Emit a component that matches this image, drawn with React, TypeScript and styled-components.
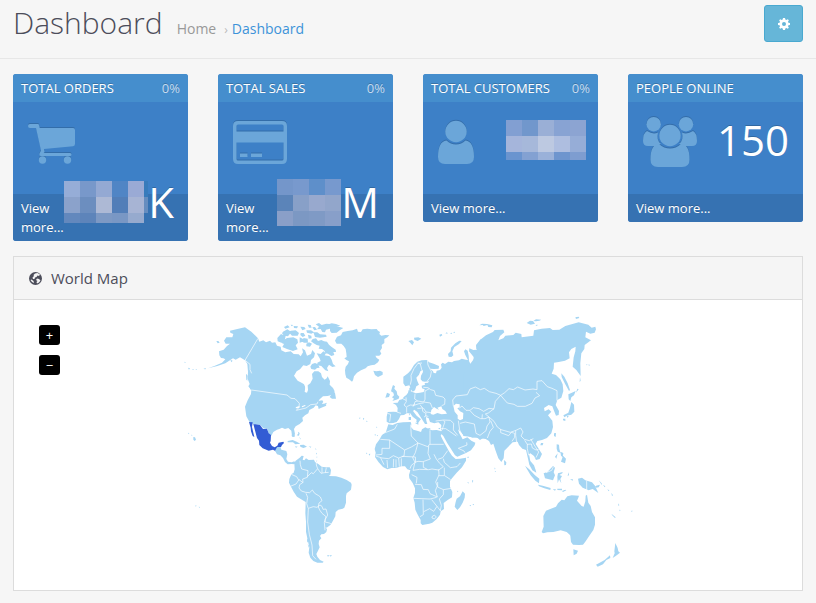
import React from 'react';
import styled, { createGlobalStyle } from 'styled-components';

const GlobalStyle = createGlobalStyle`
  * { box-sizing: border-box; }
  body {
    margin: 0;
    background: #f6f6f6;
    color: #4c4d5a;
    font: 13px/18px 'Open Sans', 'Noto Sans', sans-serif;
  }
`;

const PageHeader = styled.header`
  display: flex;
  justify-content: space-between;
  align-items: flex-start;
  padding: 5px 13px 16px;
  border-bottom: 1px solid #e7e7e7;
`;

const TitleGroup = styled.div`
  display: flex;
  align-items: baseline;
  gap: 14px;
`;

const Title = styled.h1`
  margin: 0;
  font-size: 30px;
  font-weight: 300;
  line-height: 36px;
`;

const Breadcrumb = styled.nav`
  display: flex;
  align-items: baseline;
  gap: 8px;
  font-size: 14px;
  color: #bbb;
`;

const Crumb = styled.a<{ $current?: boolean }>`
  color: ${(p) => (p.$current ? '#3d93d9' : '#999')};
  text-decoration: none;
`;

const Separator = styled.span`
  font-size: 12px;
  margin-right: -4px;
`;

const SettingsButton = styled.button`
  display: flex;
  align-items: center;
  justify-content: center;
  width: 39px;
  height: 37px;
  padding: 0;
  color: #fff;
  background: #66b6d8;
  border: 1px solid #49a9d0;
  border-radius: 3px;
`;

const Content = styled.main`
  padding: 15px 13px 12px;
`;

const TileRow = styled.section`
  display: grid;
  grid-template-columns: repeat(4, minmax(0, 1fr));
  align-items: start;
  gap: 30px;
  margin-bottom: 15px;
`;

const TileBox = styled.article`
  background: #3d80c7;
  border-radius: 3px;
  color: #fff;
  text-shadow: 0 -1px 0 rgba(0, 0, 0, 0.2);
`;

const TileHeading = styled.h2`
  display: flex;
  justify-content: space-between;
  margin: 0;
  padding: 5px 8px;
  font-size: 13px;
  font-weight: 400;
  line-height: 18px;
  white-space: nowrap;
  background: #458ecd;
  border-radius: 3px 3px 0 0;
`;

const Percent = styled.span`
  color: #c6dcf0;
`;

const TileBody = styled.div`
  height: 92px;
  padding: 15px 12px 15px 15px;
`;

const TileIcon = styled.div`
  float: left;
  height: 62px;
  color: #6ba6d9;
  svg { display: block; filter: drop-shadow(0 -1px 0 rgba(0, 0, 0, 0.15)); }
`;

const Amount = styled.div`
  float: right;
  display: flex;
  align-items: center;
  height: 46px;
  font-size: 42px;
  line-height: 46px;
`;

const AmountText = styled.span`
  padding-right: 2px;
`;

const TileFooter = styled.footer`
  padding: 5px 8px 4px;
  line-height: 19px;
  background: #3672b2;
  border-radius: 0 0 3px 3px;
`;

const MoreLink = styled.a`
  color: #fff;
  text-decoration: none;
`;

const Mosaic = styled.div<{ $cols: string; $rows: string }>`
  display: grid;
  grid-template-columns: ${(p) => p.$cols};
  grid-template-rows: ${(p) => p.$rows};
`;

const MosaicCell = styled.span<{ $color: string }>`
  background: ${(p) => p.$color};
`;

const Panel = styled.section`
  background: #fff;
  border: 1px solid #dcdcdc;
`;

const PanelHeading = styled.h2`
  display: flex;
  align-items: center;
  gap: 9px;
  margin: 0;
  padding: 11px 15px;
  font-size: 15px;
  font-weight: 400;
  line-height: 20px;
  background: #f5f5f5;
  border-bottom: 1px solid #dcdcdc;
`;

const MapArea = styled.div`
  position: relative;
  padding: 10px 0 20px;
  svg { display: block; width: 100%; height: auto; }
`;

const ZoomControls = styled.div`
  position: absolute;
  top: 25px;
  left: 25px;
  display: grid;
  gap: 10px;
`;

const ZoomButton = styled.button`
  width: 21px;
  height: 20px;
  padding: 0;
  color: #fff;
  background: #000;
  border: 0;
  border-radius: 3px;
  font: 13px/20px 'Open Sans', sans-serif;
`;

const GearIcon = () => (
  <svg width="12" height="12" viewBox="0 0 24 24" fill="currentColor" fillRule="evenodd" aria-hidden="true">
    <path d="M10 0h4l.7 3.2 2 .8L19.500 2.300l2.200 2.200L20 7.300l.8 2 3.200.7v4l-3.200.7-.8 2 1.700 2.800-2.200 2.200-2.800-1.700-2 .8L14 24h-4l-.7-3.200-2-.8-2.800 1.700-2.200-2.200L4 16.700l-.8-2L0 14v-4l3.200-.7.8-2-1.700-2.800 2.200-2.200L7.300 4l2-.8zM12 8a4 4 0 1 0 0 8a4 4 0 1 0 0-8z" />
  </svg>
);

const GlobeIcon = () => (
  <svg width="13" height="13" viewBox="0 0 26 26" aria-hidden="true">
    <circle cx="13" cy="13" r="13" fill="#4c4d5a" />
    <path fill="#f5f5f5" d="M12 3L17 2 22 5 20 8 17 7 15 10 12 11 11 14 8 14 7 11 10 8 9 6z M16 13L20 14 23 17 20 21 16 23 15 20 17 18 14 16z M5 15L9 18 10 22 6 20 3 16z" />
  </svg>
);

const CartIcon = () => (
  <svg width="48" height="50" viewBox="0 0 48 50" fill="currentColor" aria-hidden="true">
    <path d="M2 7h8q1 0 1.300 2l.4 2H45q2 0 2 2v14q0 2-2 2.200L16 32l.5 2.500q0 1-1 1.500h26.500q1.500 0 1.500 1.500T42 39H13q-2 0-1.500-2.500l1.500-3L8 11H2Q0 11 0 9t2-2z" />
    <circle cx="14.500" cy="43" r="3.700" /><circle cx="39.500" cy="43" r="3.700" />
  </svg>
);

const CardIcon = () => (
  <svg width="54" height="50" viewBox="0 0 54 50" fill="currentColor" fillRule="evenodd" aria-hidden="true">
    <path d="M5 4h44q5 0 5 5v33q0 5-5 5H5q-5 0-5-5V9q0-5 5-5zM5 7.500q-1.500 0-1.500 1.500v5.500h47V9q0-1.500-1.500-1.500zM3.500 25.500V42q0 1.500 1.500 1.500h44q1.500 0 1.500-1.500V25.500zM7 36.500h7.500V40H7zM18 36.500h11V40H18z" />
  </svg>
);

const UserIcon = () => (
  <svg width="36" height="50" viewBox="0 0 36 50" fill="currentColor" aria-hidden="true">
    <circle cx="18" cy="14.500" r="10.700" />
    <path d="M8.500 23.500q4 4 9.500 4t9.500-4Q36 24.500 36 40q0 7-7 7H7q-7 0-7-7Q0 24.500 8.500 23.500z" />
  </svg>
);

const UsersIcon = () => (
  <svg width="54" height="50" viewBox="0 0 54 50" fill="currentColor" aria-hidden="true">
    <circle cx="10.700" cy="7.200" r="7.200" /><circle cx="43" cy="7.200" r="7.200" /><circle cx="27" cy="18.500" r="10.700" />
    <path d="M4 14q6 4 11 1.500-2 8 3 11.500-2 0-3 2H5q-5 0-5-5 0-8 4-10zM50 14q-6 4-11 1.500 2 8-3 11.500 2 0 3 2h10q5 0 5-5 0-8-4-10z" />
    <path d="M16 27q5 4.500 11 4.500T38 27q8.500 0 8.500 15.500 0 7.500-7.500 7.500H15q-7.500 0-7.500-7.500Q7.500 27 16 27z" />
  </svg>
);

const land = '#a5d5f3';
const highlight = '#325cd4';

const Lines = ({ d }: { d: string }) => (
  <path d={d} fill="none" stroke="#fff" strokeOpacity="0.8" strokeWidth="2.500" strokeLinejoin="round" />
);

const WorldMap = () => (
  <svg viewBox="-498 0 2364 780" fill={land} role="img" aria-label="World map with Mexico highlighted">
    {/* North America */}
    <g>
      <path d="M150 62L172 57 195 52 214 65 234 85 238 95 250 91 258 97 270 92 276 98 286 97 291 107 302 110 304 121 316 127 332 124 341 132 356 133 362 139 369 127 366 115 375 121 381 137 393 132 397 120 405 130 402 142 393 150 391 162 380 168 370 166 360 178 350 184 342 197 353 212 366 219 372 223 376 232 374 246 381 248 384 240 383 226 391 220 398 206 396 192 403 184 415 184 423 190 426 201 434 209 440 205 443 199 450 213 449 224 459 234 464 244 457 254 443 258 429 259 419 268 411 280 414 273 427 271 430 276 425 281 436 281 439 287 424 293 416 297 414 288 407 286 401 293 388 300 385 310 375 316 367 323 369 333 359 342 347 349 342 357 345 372 341 381 336 377 334 362 325 354 315 357 306 353 298 357 291 359 280 366 274 377 266 371 262 356 250 355 241 345 221 343 208 335 199 319 195 290 203 271 213 252 214 240 205 229 209 222 203 206 204 185 202 162 195 151 180 142 167 149 159 145 151 150 136 160 112 168 84 175 103 168 126 158 136 148 130 145 123 144 118 136 117 124 131 119 141 108 150 101 137 101 132 92 139 82 157 82 160 72 151 68z" />
      <path d="M109 93l6 0 4 5-6 2zM13 155l4 2-2 3zM24 173l6 2-3 4zM36 177l5 0-1 3zM46 178l4-1v3zM70 177l7-3 0 4zM151 149l7 3-4 5zM198 191l5 6-1 15-3-3zM207 227l12 11 0 5-8-5z" />
      <path d="M312 51l11-5 6 6-13 4zM332 44l8 1-5 4zM341 48l13 1-3 6-9-1zM309 65l13-7 12 8-10 13-12-2-6-7zM332 62l15-1 10 8-4 8-17 0-7-7zM361 50l12 1 4 6-10 4zM362 69l9 0 5 8-8 4-7-6zM292 84l11-12 14 7-4 14-9 5-11-4zM307 93l14-9 19-2 12 6 2 10-7 8 6 12-14 5-18-6-14-6 5-9-7-3zM359 82l10 5-1 8-9 3zM371 84l12 2 1 12-12 0-8-4zM384 74l10 3 1 8-9 1zM379 101l8-4 9 4-6 9-11-1zM383 44l9 1 3 8-8 0zM397 52l8-1 6 8-8 2zM379 61l14 0 9 6-8 4-13-3zM407 43l10-4 8 6 14-4 9 1 7-2 13 2 13 5-18 5-16 5-9 2-3 8-8-1-5-9-11 1 6-8zM400 67l12 0 8 6 18 1 2 6-20 3-15-2zM398 87l10-2 6 8 10-3 8 4 9 1 6 9 8 7 12 8 1 7-8 0 3 9-9 3-10-7-7-1-4-8-7-5-10-1 3-9-9-2-9-5-8-6zM410 130l12 2 8-8 8 6-4 6 15 3 6 10 4 13 8 7-10 2-10-7-6 10 4 10-9-3-12-13-12-2 0-8 10-5-3-8z" />
      <path d="M391 170l5-8 9-3 9 4 5 10-8 1-6 5-11-2zM449 261l7-10 4-9 5 7 3 17-12 0zM415 284l12 1 12-7 1 4-13 7-11 1z" />
      <path fill="#fff" d="M375 224l5 0 2 15-5 6zM347 292l8-3 6 1-6 4-7 1zM365 289l10-4 2 2-10 5z" />
      <g fill={highlight}>
        <path d="M207 336l11 1-2 14 3 13 4 17-5-3-5-14-1-11z" />
        <path d="M220 342l20 3 9 12 12-1 5 14 7 5-1 18-2 5 6 10 8 4 8-5 4-9 14-3 2 4-6 6-3 6-12 2-1 12-11-6-13 3-18-7-10-10-1-13-6-8z" />
      </g>
      <Lines d="M234 85L195 151 210 163 210 179 215 190M214 240L321 255 333 265 345 266 358 280 357 292 349 301 378 294 392 284 411 282 414 275" />
    </g>

    {/* Central and South America */}
    <g transform="translate(0 360)">
      <path d="M285 62l6-10 10-1 3 8 15 4 3 10-3 14 5 8 11 2 8-3 4 6-4 3-8-1-12 1-8-7-6-12-8-8-10-3zM323 33l15-3 12 5 11 6-15 2-7-6-16 0zM360 45l11-1 10 6-11 4-9-4zM345 49l8 1-5 3zM386 49l8 1-2 3zM405 55l4 2-1 3zM408 68l3 2-2 4zM409 80l3 0-1 4zM408 92l4 0-3 4zM335 15l4-3 6 5-1 3-8 0zM350 16l5-5-1-6 5 4-2 8zM357 22l4 2 2 5z" />
      <path d="M343 100L347 92 359 83 365 77 371 78 368 89 373 91 378 85 386 90 402 89 405 96 415 102 425 110 437 112 449 112 453 120 451 134 446 138 468 139 484 143 500 150 513 158 515 164 513 179 500 190 498 198 498 218 493 233 488 236 475 239 467 246 466 259 458 274 452 284 440 293 436 291 441 298 439 306 432 312 424 313 420 318 424 325 417 332 416 342 419 352 414 362 409 372 412 380 420 390 431 395 428 398 412 398 400 393 391 383 386 368 388 352 383 330 378 305 378 275 376 250 377 216 362 207 351 200 341 185 333 170 327 158 328 147 334 133 341 128 344 118z" />
      <path d="M441 376l8 0-5 4zM449 376l7 0-4 4zM382 326l3 2-1 10-3-4zM383 343l4 4 0 7zM24 8l4 2-2 3zM33 14l4 1-1 3zM40 21l5 1 3 7-4 4-4-4zM46 226l4 1-3 3zM56 230l4 1-2 3z" />
      <Lines d="M360 92l1 12 4 13 19 5-2 20-14 5 1 11-12-9-9 13-17 7M334 133l16 7 6 10M382 140l12-12 6 3 13-15-4-11 0-11M413 116l10 14 10-2 13-1M426 112l0 17M439 113l-3 15M368 158l-9 6-2 10 7 9 13 4 12 1 8-8 7 10 12 7 5 4 5 11-9 7-2 12 4 9 7 10 12 10-5 17 2 24M378 190l5 12-3 19 5 15-2 40 5 37 8 32 2 32 10 11M385 235l15-5 11 2 9-7 6 4 3 9 9-1 5 18-7 13-1 8 13 3 9 5" />
    </g>

    {/* Greenland, Europe */}
    <g transform="translate(450 0)">
      <path d="M15 92L21 80 33 76 38 66 53 63 68 61 81 56 84 65 93 66 98 58 112 56 124 58 140 57 144 62 150 66 148 72 154 77 166 75 178 76 172 82 163 87 163 99 155 105 156 114 150 123 154 131 148 137 136 137 140 144 148 149 144 157 134 164 123 166 113 169 107 175 93 181 81 188 72 199 69 211 66 215 57 208 49 203 46 193 45 181 47 170 54 162 57 154 49 150 43 145 50 141 49 130 47 117 41 108 34 101 20 101zM0 45L11 42 21 49 40 54 30 60 20 68 5 69 0 63zM130 182l9 2 11-2 8 4 0 8-14 7-9-6z" />
      <path d="M235 93l11-3 6 7-5 9-6-8zM252 83l13-1 9 4-11 7-10-4zM328 74l7-2 2 4-7 4zM346 70l5-3 2 4zM360 70l6-2-1 4zM369 67l6-2-1 4zM354 132l8-8 1-11 13-13 12-8 7 1-8 9-14 9-6 13 3 12-6 5-8-1z" />
      <path d="M186 233L189 225 195 229 193 236 200 244 202 254 208 260 206 266 199 269 187 273 192 266 186 262 192 256 190 248 183 244zM166 263L171 248 180 252 177 261zM238 234L244 231 245 240 238 246z" />
      <path d="M170 335L170 320 173 306 190 305 202 306 203 294 198 285 188 279 203 278 208 270 216 268 222 260 229 255 234 248 236 240 247 246 258 250 270 248 281 246 284 238 276 235 275 227 285 224 284 219 294 218 297 214 284 215 277 214 272 208 273 197 279 186 278 180 271 184 267 194 259 203 262 213 267 224 259 229 255 241 248 245 243 238 238 226 226 229 220 220 220 200 234 190 243 180 252 165 262 155 275 151 291 150 297 157 311 161 327 168 326 176 312 177 300 176 309 184 311 189 318 190 320 182 330 180 335 173 333 163 338 158 345 162 355 155 366 157 372 153 387 151 395 146 408 149 414 150 406 135 402 124 406 118 413 122 416 137 417 153 422 163 430 155 431 141 417 124 418 115 430 120 441 119 440 108 452 88 560 100 560 320 450 390 440 382 427 383 412 377 402 378 392 366 384 358 388 370 394 380 398 388 412 382 424 392 436 398 434 406 423 421 408 429 382 440 375 436 365 420 352 400 340 378 332 370 334 345 325 337 313 340 300 336 296 325 288 321 289 332 292 342 285 342 276 328 262 306 253 299 249 303 260 317 273 328 269 332 263 341 259 335 260 329 248 320 240 309 230 310 222 315 212 316 207 327 200 336 190 339 178 340z" />
      <path fill="#fff" d="M302 312L304 300 312 291 320 296 327 299 322 293 334 289 337 297 346 303 351 311 335 313 322 309 310 314zM0 0z" />
      <path d="M236 321l7 0 0 9-7 0zM236 308l4 3-2 6zM256 338l9 1 0 5-9-4zM290 354l12 1-3 3zM324 355l8-2-3 5zM87 323l5 0-3 4zM99 323l4 3-4 4zM108 332l6 2-5 1zM138 350l4 1-2 3zM133 374l5-1-2 4zM140 376l4-1-1 4zM108 428l4 1-2 4zM116 432l5-1-2 6z" />
      <Lines d="M241 224l3-14-1-14 9-20 12-16 12-1M276 182l-5-20-8-3M292 151l2 14 10 20-3 16-9 12M280 232l14 1 8 6 11 3 4 14 22 5 6 6-1 16-9 4M285 242l0 26-4 8-18-3-9-6 1-16M285 243l13-7M228 262l1 13-7 10 8 7 0 16M216 265l12 6M230 290l11-5 11 1 3-11 8-2M281 276l20 3 6 15M253 281l-4 9M252 286l18-6 11-1M280 294l8 12 15 2M288 307l-1 11 8 1M270 284l7 9 1 11 9 6M262 295l8 0 8-2M282 321l7-4M172 310l10 3-3 22M200 306l13 4" />
    </g>

    {/* Asia */}
    <g transform="translate(870 0)">
      <path d="M28 46l8-5 15 1 16 4-2 6-10-1-3-6-11 3-3-3zM170 39l10-7 9 1 6 8-13 3zM190 33l8-5 16 1-6 3-10 2zM196 45l7-1-2 4zM316 22l10-2 2 4-10 3zM348 163l5 1-3 2zM354 164l6 0-2 3z" />
      <path d="M-20 190L12 146 30 122 19 118 18 105 30 90 48 76 69 66 74 60 100 59 103 67 90 78 85 91 100 85 106 77 130 75 137 68 154 72 155 82 190 77 192 61 215 56 240 54 248 60 268 59 286 48 326 37 355 44 365 53 376 50 378 58 374 68 361 71 348 65 346 82 363 91 356 96 344 105 343 117 334 130 331 160 332 198 319 180 308 170 311 142 316 124 317 110 304 117 297 127 299 145 285 152 266 156 252 158 251 176 245 191 258 195 271 208 278 223 280 243 274 263 262 270 257 285 267 303 266 315 258 317 252 302 247 289 236 285 222 294 224 304 236 298 244 305 234 316 247 332 249 351 244 370 231 384 216 390 202 393 197 402 216 432 209 447 198 450 192 438 181 430 177 433 181 453 192 466 197 480 199 488 187 481 178 464 174 446 168 420 157 416 147 405 143 395 128 397 112 413 103 422 101 445 94 456 85 445 76 420 70 401 63 405 57 393 47 387 20 383 2 380 -20 378z" />
      <path d="M274 190l9 10 10 20 7 20-3 3-12-22-10-20zM295 253l9-4 13-6-5 13-8 6-3 11-5-5zM304 276l8 8 1 21-9 9-14 3-7 5-3-6 15-8 5-15zM279 326l7 0 0 7-7-2zM290 318l6 0-3 6zM330 202l2 10-3 4zM252 370l6-1-1 12-5-3zM213 399l7 0-2 7-7 0zM322 236l4 2-8 10zM260 403l7 1 1 12 3 12-8-3-3-9zM255 440l8-10-4 16zM271 425l9 4-2 13-5-5zM279 437l9 9-3 14-12-5zM102 450l7 7-1 8-5 1z" />
      <path fill="#fff" d="M-50 288L-42 281 -31 283 -31 292 -38 295 -30 304 -20 309 -21 327 -30 331 -37 326 -37 316 -46 305z" />
      <Lines d="M-50 288l-2-18 10-12 34-4 8-17 16-6 15 8 12-4 15 10 20 5 14 6 12-8 13-12 13 3 13-8 22 9 24-3 12 2 0-25 15-2 16 18 14 5 15 7 0 30M92 256l-16 18-4 22-17 13-9 3M92 256l12 14 8 9 20 4 10 6 24 0 20-9 9-16 14-7-11-10M46 312l12 10 14 12 10 17 11 8 28 8 17-6 14-7 7 12-6 12 10 10 15 4 12-6M-32 294l8-6 12 13 12 0 10-8 17 3 14 8 16-9 15 2M0 302l13 14 19 10 13 0 12-5 3 15-9 12-3 14-18 14-12-6-5-28-27-6-16 4M37 313l-1 13M62 332l8 20-10 12-8 20M-35 332l4 28 9 18M-103 333l24-3 20 1 10 9-1 20 13 16M-80 332l5 3-9 25-13 14M-88 356l15 0 12 8 20 14M-35 415l17 8 3 5M-35 415l26-10-1-8M92 357l0 11 24 9 8-10 10 3 0 12-8 12M137 362l0 14 3 22M172 402l0 14 4 20M164 391l8 12 12-1 3 12 11 6 8-2M182 387l10 17 14 22-8 17" />
    </g>

    {/* Africa, Oceania */}
    <g transform="translate(540 300)">
      <path d="M85 43L98 45 112 39 129 37 152 36 154 42 153 51 160 59 174 63 183 66 186 58 196 52 206 57 216 61 230 60 242 63 246 70 242 77 252 97 260 111 267 124 276 137 287 147 300 146 318 143 318 152 306 172 290 188 276 205 270 213 270 230 277 246 276 262 263 270 251 279 252 297 242 304 240 314 230 327 217 338 208 341 187 345 182 340 182 330 174 316 166 299 164 278 160 264 165 249 165 235 158 219 148 205 147 195 151 181 142 178 135 169 124 169 108 174 95 174 82 178 69 171 56 157 45 141 47 128 44 117 48 103 58 89 66 75 78 65zM308 244L315 251 314 263 308 278 300 292 292 300 284 290 287 276 290 266 300 259z" />
      <path d="M322 217l4 0-1 4zM336 210l4 2-3 7zM328 286l5-1-1 4zM337 283l5-1-1 4zM291 242l4 2-2 3zM403 173l3 1-1 5zM404 183l4 0-2 3zM320 141l7-1-2 4zM495 167l12 10 18 19 13 10-1 14-11-8-14-16zM534 224l14 3 24 7-1 6-18-5-16-6zM551 190l11-4 17-18 6 5-4 14 4 9-6 15-24-6zM594 190l14-4-1 4-9 5 8 3-5 9 3 13-7-12-4 12-1-20zM578 238l10 0-3 4zM592 236l14 0 0 5-14-1zM606 243l10-4 3 2-10 5zM625 187l2 8-4 4zM630 208l9 0-1 4zM654 206l12-3 10 8 20 6 9 10 10 22-17-12-12 4-18-8-11-12zM708 227l12-3-4 8-12 2zM716 211l9 9 1 6zM729 224l7 5-2 3zM742 238l6 3-2 3zM754 248l5 8-3 2zM774 280l4 5-2 4zM778 299l4 1-3 4zM755 312l12 10-2 2-9-9zM814 302l4 0-3 5z" />
      <path d="M550 318L558 302 588 290 594 280 605 269 613 271 622 259 635 256 657 257 655 263 651 272 665 288 671 290 676 274 677 257 681 254 685 278 692 288 696 306 705 322 705 344 700 360 688 377 677 394 669 404 657 405 639 404 633 396 631 377 629 374 620 366 602 361 580 366 562 367 549 370 545 366 551 350z" />
      <path d="M640 418l14 4-4 9-9 5zM766 399l7 15 2 10 5 4-12 9-10 7 6-14-1-6zM750 436l1 8-12 6-10 13-16 7-5-6 26-14z" />
      <Lines d="M68 71l36-14 8-14M61 88l28 2 0 25-23 0 0 18-18 2M89 90l45 30 20-9 20-12-20-21-2-34M174 99l32 12 0-6 4-2 0-42M210 103l41 0M206 111l-2 19 7 17-22 8-15-1-9 3-7-14 8-15 8-29M134 120l-2 18-16 6-16-7-14 9-20-2-19-6M116 144l2 26M101 147l-1 25M108 148l0 25M81 150l2 24M124 145l0 24M125 139l41 2 1 15-13 10-4 10M62 144l10 20M165 157l-6 24 20-3 27 1 10-2 20 3 14-10-11-10-10-13-7-14M234 148l14-5 15-21M250 146l3 11 18 16 20-3 10-11M236 178l1 17-10 21 5 12-6 14 6 19-22-10-5-12-16-1-5-14-19-1M155 194l16 8-2 18M236 197l18 0 18 12M253 173l0 23M233 216l0 15 17 8 0 15-12 13 6 19-3 16M250 239l24-4M160 265l50 2 20-5M189 269l1 45-10 6M191 305l18-9 12 8 10-15-16-20M231 289l11 14M216 320l7-5 6 6-6 6-7-3zM190 156l0 16 12 6M680 212l0 30M558 188l17-7 5-10" />
    </g>
  </svg>
);

interface Blur { cols: string; rows: string; colors: string[] }

const ordersBlur: Blur = {
  cols: '16px 16px 16px 16px 16px 4px',
  rows: '16px 16px 10px',
  colors: [
    '#96add7', '#7898ca', '#94a9d3', '#5085c5', '#9aaad5', '#387bbb',
    '#8ba2cb', '#6c8ebf', '#adb9d5', '#527eb8', '#a7b4d4', '#668dbf',
    '#6388bd', '#5d84ba', '#7d99c4', '#7997c4', '#96aace', 'transparent',
  ],
};

const salesBlur: Blur = {
  cols: 'repeat(4, 16px)',
  rows: '16px 16px 15px',
  colors: [
    '#7496ca', '#7899cd', '#5e8fca', '#7799ce',
    '#5b84b9', '#88a0c8', '#98a9ce', '#92a6cb',
    '#8a9fc8', '#7c98c3', '#7f9ac5', '#889fc9',
  ],
};

const customersBlur: Blur = {
  cols: 'repeat(5, 16px)',
  rows: '16px 16px 8px',
  colors: [
    '#829fd2', '#7197cc', '#9aafd6', '#88a3d3', '#8ca4d2',
    '#a5b5db', '#a6b8da', '#bdc9e1', '#aebee0', '#96add7',
    '#6a94cf', '#83a1d2', '#9ab1d9', '#6e95ce', '#7e9dd0',
  ],
};

interface TileProps {
  title: string;
  percent?: string;
  icon: React.ReactNode;
  blur?: Blur;
  amount?: string;
}

const Tile = ({ title, percent, icon, blur, amount }: TileProps) => (
  <TileBox>
    <TileHeading>{title}{percent && <Percent>{percent}</Percent>}</TileHeading>
    <TileBody>
      <TileIcon>{icon}</TileIcon>
      <Amount>
        {blur && (
          <Mosaic $cols={blur.cols} $rows={blur.rows}>
            {blur.colors.map((color, i) => <MosaicCell key={i} $color={color} />)}
          </Mosaic>
        )}
        {amount && <AmountText>{amount}</AmountText>}
      </Amount>
    </TileBody>
    <TileFooter><MoreLink href="#">View more...</MoreLink></TileFooter>
  </TileBox>
);

export default function App() {
  return (
    <>
      <GlobalStyle />
      <PageHeader>
        <TitleGroup>
          <Title>Dashboard</Title>
          <Breadcrumb aria-label="Breadcrumb">
            <Crumb href="#">Home</Crumb>
            <Separator>›</Separator>
            <Crumb href="#" $current>Dashboard</Crumb>
          </Breadcrumb>
        </TitleGroup>
        <SettingsButton type="button" aria-label="Settings"><GearIcon /></SettingsButton>
      </PageHeader>
      <Content>
        <TileRow>
          <Tile title="TOTAL ORDERS" percent="0%" icon={<CartIcon />} blur={ordersBlur} amount="K" />
          <Tile title="TOTAL SALES" percent="0%" icon={<CardIcon />} blur={salesBlur} amount="M" />
          <Tile title="TOTAL CUSTOMERS" percent="0%" icon={<UserIcon />} blur={customersBlur} />
          <Tile title="PEOPLE ONLINE" icon={<UsersIcon />} amount="150" />
        </TileRow>
        <Panel>
          <PanelHeading><GlobeIcon />World Map</PanelHeading>
          <MapArea>
            <WorldMap />
            <ZoomControls>
              <ZoomButton type="button" aria-label="Zoom in">+</ZoomButton>
              <ZoomButton type="button" aria-label="Zoom out">−</ZoomButton>
            </ZoomControls>
          </MapArea>
        </Panel>
      </Content>
    </>
  );
}
